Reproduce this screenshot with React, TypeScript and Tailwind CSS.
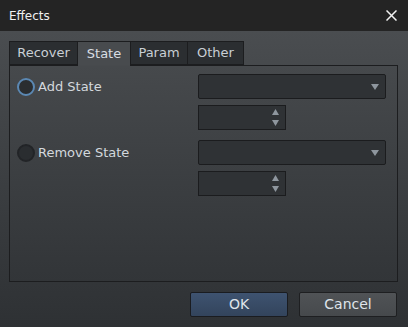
import React from 'react';

const font = { fontFamily: '"DejaVu Sans", "Noto Sans", sans-serif' };

function Radio({ label, focused }: { label: string; focused?: boolean }) {
  return (
    <div className="flex h-[25px] items-center gap-[3px]">
      <div
        className={`h-[18px] w-[18px] rounded-full border-2 bg-[#2a2d30] ${
          focused ? 'border-[#5b88b3]' : 'border-[#222427]'
        }`}
      />
      <span className="text-[13px] text-[#d3d8dd]">{label}</span>
    </div>
  );
}

function Combo() {
  return (
    <div className="flex h-[25px] w-[188px] items-center justify-end rounded-[2px] border border-[#1b1c1e] bg-[#2f3235] pr-[6px]">
      <svg width="8" height="6" viewBox="0 0 8 6">
        <path d="M0 0 L8 0 L4 6 Z" fill="#8e969e" />
      </svg>
    </div>
  );
}

function Spin() {
  return (
    <div className="flex h-[25px] w-[88px] flex-col items-end justify-center gap-[5px] border border-[#1b1c1e] bg-[#2f3235] pr-[6px]">
      <svg width="7" height="6" viewBox="0 0 7 6">
        <path d="M3.5 0 L7 6 L0 6 Z" fill="#8e969e" />
      </svg>
      <svg width="7" height="6" viewBox="0 0 7 6">
        <path d="M0 0 L7 0 L3.5 6 Z" fill="#8e969e" />
      </svg>
    </div>
  );
}

function Group({ label, focused }: { label: string; focused?: boolean }) {
  return (
    <div className="grid grid-cols-[181px_188px] gap-y-[6px]">
      <Radio label={label} focused={focused} />
      <Combo />
      <div />
      <Spin />
    </div>
  );
}

const tabs = [
  { name: 'Recover', w: 'w-[69px]' },
  { name: 'State', w: 'w-[54px]' },
  { name: 'Param', w: 'w-[58px]' },
  { name: 'Other', w: 'w-[57px]' },
];

export default function App() {
  return (
    <div className="flex h-[327px] w-[408px] flex-col overflow-hidden bg-[#303336]" style={font}>
      <div className="flex h-[31px] shrink-0 items-center justify-between bg-[#242424] pl-[9px] pr-[11px]">
        <span className="text-[12px] text-[#f0f0f0]">Effects</span>
        <svg width="11" height="11" viewBox="0 0 11 11">
          <path d="M0.5 0.5 L10.5 10.5 M10.5 0.5 L0.5 10.5" stroke="#f2f2f2" strokeWidth="1.5" />
        </svg>
      </div>
      <div className="flex flex-1 flex-col bg-gradient-to-b from-[#4a4d50] to-[#2e3134] pl-[9px] pr-[10px] pt-[10px]">
        <div className="flex h-[24px] items-stretch">
          {tabs.map((t) => {
            const active = t.name === 'State';
            return (
              <div
                key={t.name}
                className={`${t.w} relative -mr-px flex items-center justify-center border border-[#1c1d1f] text-[13px] ${
                  active
                    ? 'z-10 border-b-0 bg-[#484b4e] text-[#d8dde2]'
                    : 'bg-[#2b2e31] text-[#c9cfd5]'
                }`}
              >
                {active && <div className="absolute -bottom-px left-0 right-0 h-px bg-[#474a4d]" />}
                {t.name}
              </div>
            );
          })}
        </div>
        <div className="flex h-[217px] flex-col gap-[10px] border border-[#1c1d1f] bg-gradient-to-b from-[#46494c] to-[#323538] pl-[7px] pt-[8px]">
          <Group label="Add State" focused />
          <Group label="Remove State" />
        </div>
        <div className="flex justify-end gap-[11px] pr-px pt-[10px]">
          <button className="h-[25px] w-[98px] rounded-[2px] border border-[#1a1c20] bg-gradient-to-b from-[#3e5370] to-[#33445c] text-[14px] text-[#dfe4ea]">
            OK
          </button>
          <button className="h-[25px] w-[98px] rounded-[2px] border border-[#1e1f21] bg-gradient-to-b from-[#505356] to-[#46494c] text-[14px] text-[#dfe4ea]">
            Cancel
          </button>
        </div>
      </div>
    </div>
  );
}
